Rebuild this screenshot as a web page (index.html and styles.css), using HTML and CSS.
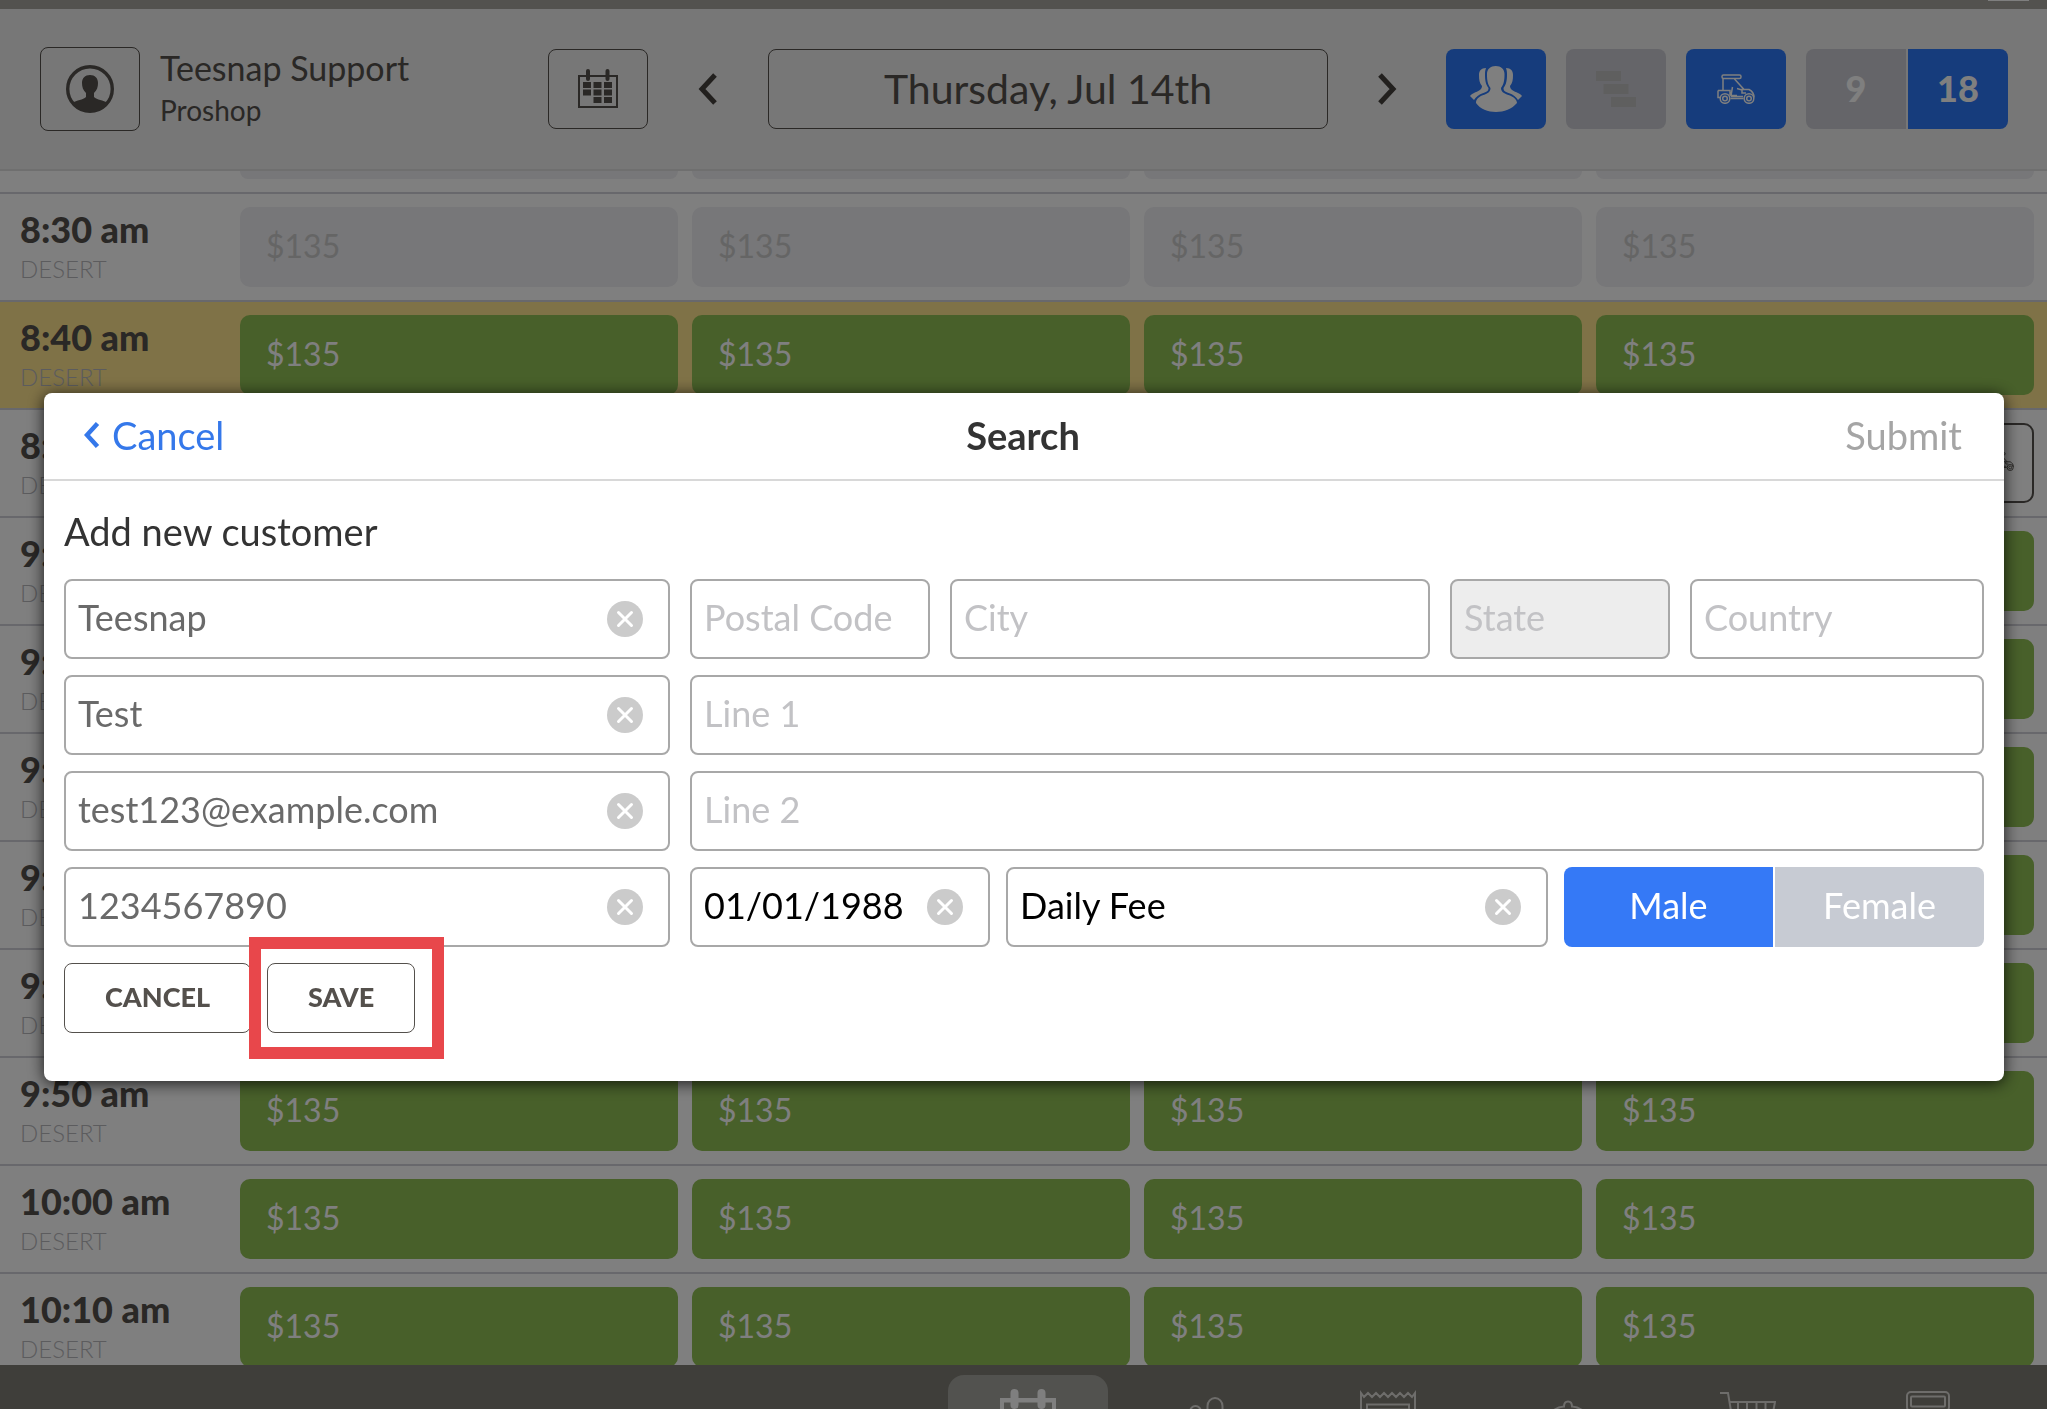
FILE: index.html
```html
<!DOCTYPE html>
<html lang="en">
<head>
<meta charset="utf-8">
<title>Tee Sheet</title>
<link rel="stylesheet" href="styles.css">
</head>
<body>
<svg class="symbols" aria-hidden="true">
  <symbol id="cart" viewBox="0 0 38 30">
    <g fill="none" stroke="currentColor" stroke-width="1.5">
      <rect x="5" y="1" width="19" height="3.5" rx="1.5"/>
      <path d="M6 5v11M17.500 5l10 11M1 16.500h12v5M1 16.500v7h2M15.500 13l-1.500 8.500h6M20 14.500l5 1.500v3h4M24 15.500h8c3 1.500 5 4 5 8M13.500 24.500h13M14 22.500h12"/>
      <circle cx="8" cy="24.500" r="4.800"/><circle cx="8" cy="24.500" r="2.300"/>
      <circle cx="32" cy="24.500" r="4.800"/><circle cx="32" cy="24.500" r="2.300"/>
    </g>
  </symbol>
  <symbol id="clear" viewBox="0 0 36 36">
    <circle cx="18" cy="18" r="18" fill="#cbcbcb"/>
    <path d="M11.500 11.500l13 13M24.500 11.500l-13 13" stroke="#fff" stroke-width="3" stroke-linecap="round"/>
  </symbol>
</svg>

<div class="app">
  <div class="status-bar"><span class="battery"></span></div>
  <header class="toolbar">
    <div class="account">
      <button class="icon-button icon-button-tall" aria-label="Account">
        <svg width="48" height="48" viewBox="0 0 48 48"><circle cx="24" cy="24" r="22.300" fill="none" stroke="currentColor" stroke-width="3.400"/><path fill="currentColor" d="M24 10c5 0 8 3 8 8 0 4-1 7-4 10v4c3 3 9 3 14 6-4 6-10 9-18 9S10 44 6 38c5-3 11-3 14-6v-4c-3-3-4-6-4-10 0-5 3-8 8-8z"/></svg>
      </button>
      <div class="account-text"><div class="account-name">Teesnap Support</div><div class="account-role">Proshop</div></div>
    </div>
    <button class="icon-button" aria-label="Calendar">
      <svg width="40" height="40" viewBox="0 0 40 40" fill="currentColor"><path d="M0 6h40v33H0zM2 8v29h36V8z" fill-rule="evenodd"/><rect x="8" width="4" height="12" rx="2"/><rect x="27.500" width="4" height="12" rx="2"/><path d="M5 13h8v6H5zM15.500 13h8v6h-8zM26 13h8v6h-8zM5 20.500h8v6H5zM15.500 20.500h8v6h-8zM26 20.500h8v6h-8zM15.500 28h8v6h-8zM26 28h8v6h-8z"/></svg>
    </button>
    <button class="arrow" aria-label="Previous day"><svg width="20" height="32" viewBox="0 0 20 32"><path d="M17 2L4 16l13 14" fill="none" stroke="currentColor" stroke-width="5"/></svg></button>
    <button class="date">Thursday, Jul 14th</button>
    <button class="arrow" aria-label="Next day"><svg width="20" height="32" viewBox="0 0 20 32"><path d="M3 2l13 14L3 30" fill="none" stroke="currentColor" stroke-width="5"/></svg></button>
    <div class="toggles">
      <button class="toggle toggle-on" aria-label="Players"><svg width="52" height="46" viewBox="0 0 52 46" fill="currentColor"><path d="M25.700 0C31 0 34.500 3 34.500 8c0 6-.5 10-3.500 14 0 5 5 6 9 7.500s7 4.500 7 7.500c-5 6-13 9-21 9S10 43 6 37c0-4 3-6 6-7.500 4-1.500 8.500-2.500 8.500-7.500C17.500 18 17 14 17 8c0-5 3.500-8 8.700-8z"/><path id="side" d="M16 2c-5 0-7 3-7 7 0 5 .5 8 3 11 0 4-4 5-8 7-3 1.500-4 3-4 3l4 4c2-3 5-5.500 8-6.500 4-1.500 6.500-2 6.500-5.500C15.500 18 15 14 15 8c0-3 .5-4.500 1-6z"/><use href="#side" transform="matrix(-1 0 0 1 52 0)"/></svg></button>
      <button class="toggle" aria-label="Staggered view"><svg width="40" height="36" viewBox="0 0 40 36" fill="#bebebe"><path d="M0 0h25v10H0zM7.500 13h25v10h-25zM15 26h25v10H15z"/></svg></button>
      <button class="toggle toggle-on" aria-label="Carts"><svg width="38" height="30"><use href="#cart"/></svg></button>
      <div class="holes"><button class="toggle">9</button><button class="toggle toggle-on">18</button></div>
    </div>
  </header>

  <main class="sheet">
    <div class="row row-clipped"><div class="time"></div><span class="slot"></span><span class="slot"></span><span class="slot"></span><span class="slot"></span></div>
    <div class="row row-past"><div class="time"><b>8:30 am</b><span>DESERT</span></div><button class="slot">$135</button><button class="slot">$135</button><button class="slot">$135</button><button class="slot">$135</button></div>
    <div class="row row-current"><div class="time"><b>8:40 am</b><span>DESERT</span></div><button class="slot">$135</button><button class="slot">$135</button><button class="slot">$135</button><button class="slot">$135</button></div>
    <div class="row"><div class="time"><b>8:50 am</b><span>DESERT</span></div><button class="slot">$135</button><button class="slot">$135</button><button class="slot">$135</button><button class="slot slot-booked" aria-label="Booked"><svg width="24" height="19"><use href="#cart"/></svg></button></div>
    <div class="row"><div class="time"><b>9:00 am</b><span>DESERT</span></div><button class="slot">$135</button><button class="slot">$135</button><button class="slot">$135</button><button class="slot">$135</button></div>
    <div class="row"><div class="time"><b>9:10 am</b><span>DESERT</span></div><button class="slot">$135</button><button class="slot">$135</button><button class="slot">$135</button><button class="slot">$135</button></div>
    <div class="row"><div class="time"><b>9:20 am</b><span>DESERT</span></div><button class="slot">$135</button><button class="slot">$135</button><button class="slot">$135</button><button class="slot">$135</button></div>
    <div class="row"><div class="time"><b>9:30 am</b><span>DESERT</span></div><button class="slot">$135</button><button class="slot">$135</button><button class="slot">$135</button><button class="slot">$135</button></div>
    <div class="row"><div class="time"><b>9:40 am</b><span>DESERT</span></div><button class="slot">$135</button><button class="slot">$135</button><button class="slot">$135</button><button class="slot">$135</button></div>
    <div class="row"><div class="time"><b>9:50 am</b><span>DESERT</span></div><button class="slot">$135</button><button class="slot">$135</button><button class="slot">$135</button><button class="slot">$135</button></div>
    <div class="row"><div class="time"><b>10:00 am</b><span>DESERT</span></div><button class="slot">$135</button><button class="slot">$135</button><button class="slot">$135</button><button class="slot">$135</button></div>
    <div class="row"><div class="time"><b>10:10 am</b><span>DESERT</span></div><button class="slot">$135</button><button class="slot">$135</button><button class="slot">$135</button><button class="slot">$135</button></div>
  </main>

  <nav class="tabs">
    <a class="tab tab-active" href="#sheet" aria-label="Tee sheet"><svg width="56" height="50" viewBox="0 0 56 50" fill="currentColor"><path d="M0 9h56v41H0zM4 13.500V46h48V13.500z" fill-rule="evenodd"/><rect x="10.500" width="8" height="20" rx="4"/><rect x="37.500" width="8" height="20" rx="4"/></svg></a>
    <a class="tab" href="#customers" aria-label="Customers"><svg width="56" height="50" viewBox="0 0 56 50" fill="none" stroke="currentColor" stroke-width="2"><path d="M27.500 30V17a7.500 8 0 0 1 15 0v13M10 30v-7a5.500 6 0 0 1 11 0v7"/></svg></a>
    <a class="tab" href="#reports" aria-label="Receipts"><svg width="56" height="50" viewBox="0 0 56 50" fill="none" stroke="currentColor" stroke-width="2"><path d="M1 50V4l3 4 4-4 4 4 4-4 4 4 4-4 4 4 4-4 4 4 4-4 4 4 4-4 4 4 3-4v46"/><path d="M7 15.500h42v5H7z"/></svg></a>
    <a class="tab" href="#food" aria-label="Food"><svg width="56" height="50" viewBox="0 0 56 50" fill="none" stroke="currentColor" stroke-width="2"><path d="M6 34C7 24 16 18 24 17.500c0-2.500 1-5 4-5s4 2.500 4 5C40 18 49 24 50 34"/></svg></a>
    <a class="tab" href="#shop" aria-label="Shop"><svg width="56" height="50" viewBox="0 0 56 50" fill="none" stroke="currentColor" stroke-width="2"><path d="M0 4h8l5 30M10 13h45l-4 21M18 13v20M27 13v20M36.500 13v20M45.500 13v20"/></svg></a>
    <a class="tab" href="#register" aria-label="Register"><svg width="56" height="50" viewBox="0 0 56 50" fill="none" stroke="currentColor" stroke-width="2"><rect x="7" y="3" width="42" height="19" rx="4"/><rect x="11" y="7.500" width="34" height="10" rx="1"/></svg></a>
  </nav>
</div>

<div class="backdrop">
  <section class="dialog" role="dialog" aria-labelledby="dialog-title">
    <div class="dialog-bar">
      <a class="back" href="#back"><svg width="16" height="26" viewBox="0 0 16 26"><path d="M13.500 1.500L3 13l10.500 11.500" fill="none" stroke="currentColor" stroke-width="4.500"/></svg>Cancel</a>
      <h1 id="dialog-title">Search</h1>
      <button class="submit" disabled>Submit</button>
    </div>
    <form class="form">
      <h2>Add new customer</h2>
      <div class="fields">
        <div class="line"><div class="field"><input value="Teesnap" placeholder="First Name" aria-label="First name"><button type="button" class="clear" aria-label="Clear"><svg width="36" height="36"><use href="#clear"/></svg></button></div></div>
        <div class="line line-place">
          <div class="field"><input placeholder="Postal Code" aria-label="Postal code"></div>
          <div class="field"><input placeholder="City" aria-label="City"></div>
          <div class="field"><input placeholder="State" aria-label="State" disabled></div>
          <div class="field"><input placeholder="Country" aria-label="Country"></div>
        </div>
        <div class="line"><div class="field"><input value="Test" placeholder="Last Name" aria-label="Last name"><button type="button" class="clear" aria-label="Clear"><svg width="36" height="36"><use href="#clear"/></svg></button></div></div>
        <div class="line"><div class="field"><input placeholder="Line 1" aria-label="Address line 1"></div></div>
        <div class="line"><div class="field"><input value="test123@example.com" placeholder="Email" aria-label="Email"><button type="button" class="clear" aria-label="Clear"><svg width="36" height="36"><use href="#clear"/></svg></button></div></div>
        <div class="line"><div class="field"><input placeholder="Line 2" aria-label="Address line 2"></div></div>
        <div class="line"><div class="field"><input value="1234567890" placeholder="Phone" aria-label="Phone"><button type="button" class="clear" aria-label="Clear"><svg width="36" height="36"><use href="#clear"/></svg></button></div></div>
        <div class="line line-details">
          <div class="field field-dark"><input value="01/01/1988" aria-label="Date of birth"><button type="button" class="clear" aria-label="Clear"><svg width="36" height="36"><use href="#clear"/></svg></button></div>
          <div class="field field-dark"><input value="Daily Fee" aria-label="Customer type"><button type="button" class="clear" aria-label="Clear"><svg width="36" height="36"><use href="#clear"/></svg></button></div>
          <div class="gender">
            <label><input type="radio" name="gender" checked><span>Male</span></label>
            <label><input type="radio" name="gender"><span>Female</span></label>
          </div>
        </div>
      </div>
      <div class="actions">
        <button type="button" class="action">CANCEL</button>
        <div class="marked"><button type="button" class="action">SAVE</button></div>
      </div>
    </form>
  </section>
</div>
</body>
</html>
```
FILE: styles.css
```css
* { box-sizing: border-box; }

body {
  margin: 0;
  font-family: Lato, "Open Sans", sans-serif;
  color: #54504c;
  background: #fff;
}

button, input { font: inherit; color: inherit; margin: 0; }
button { padding: 0; border: 0; background: none; }
svg { display: block; }
.symbols { display: none; }

.app {
  display: flex;
  flex-direction: column;
  height: 100vh;
  overflow: hidden;
}

/* Top bars */
.status-bar {
  flex: none;
  display: flex;
  justify-content: flex-end;
  height: 9px;
  padding-right: 18px;
  background: #a6a49e;
}
.battery { width: 41px; height: 1px; background: #fff; }

.toolbar {
  flex: none;
  display: grid;
  grid-template-columns: 508px 100px 120px 1fr 118px auto;
  align-items: center;
  height: 162px;
  padding: 0 39px 0 40px;
  background: #eee;
  border-bottom: 2px solid #dedede;
}
.account { display: flex; align-items: center; gap: 20px; }
.account-name { font-size: 34px; line-height: 42px; }
.account-role { font-size: 28px; line-height: 42px; }

.icon-button, .date {
  display: flex;
  align-items: center;
  justify-content: center;
  height: 80px;
  border: 1px solid #54504c;
  border-radius: 8px;
}
.icon-button { width: 100px; }
.icon-button-tall { height: 84px; }
.date { padding-bottom: 2px; font-size: 41px; }
.arrow { display: flex; justify-content: center; color: #44403c; }

.toggles { display: flex; gap: 20px; }
.holes { display: flex; gap: 2px; }
.toggle {
  display: flex;
  align-items: center;
  justify-content: center;
  width: 100px;
  height: 80px;
  border-radius: 8px;
  background: #cacbd2;
  color: #fff;
  font-size: 36px;
  font-weight: 900;
}
.toggle-on { background: #2c78f8; }
.holes .toggle { padding-bottom: 3px; }
.holes .toggle:first-child { border-radius: 8px 0 0 8px; }
.holes .toggle:last-child { border-radius: 0 8px 8px 0; }

/* Tee sheet */
.sheet { flex: 1; min-height: 0; overflow: hidden; }
.row {
  display: grid;
  grid-template-columns: 206px repeat(4, 1fr);
  column-gap: 14px;
  height: 108px;
  padding: 13px 13px 13px 20px;
  border-top: 2px solid #d0d0d8;
}
.row-clipped { height: 21px; padding-top: 0; border-top: 0; }
.row-current { background: #fee48e; }
.time b { display: block; font-size: 36px; line-height: 44px; font-weight: 900; }
.time span { display: block; font-size: 24px; line-height: 36px; font-weight: 300; color: #b8b8bc; }
.slot {
  display: flex;
  align-items: center;
  padding: 0 0 4px 26px;
  border-radius: 10px;
  background: #90c054;
  color: #fff;
  font-size: 32px;
}
.row-past .slot, .row-clipped .slot { background: #eeeef2; color: #cbcbcb; }
.row-clipped .slot { border-radius: 0 0 10px 10px; }
.slot-booked {
  justify-content: flex-end;
  padding-right: 18px;
  border: 2px solid #54504c;
  background: #fff;
  color: #54504c;
}

/* Bottom tabs */
.tabs {
  flex: none;
  display: flex;
  justify-content: flex-end;
  gap: 20px;
  height: 44px;
  padding: 10px 39px 0 0;
  overflow: hidden;
  background: #7e7c74;
}
.tab {
  display: flex;
  justify-content: center;
  width: 160px;
  height: 90px;
  padding-top: 14px;
  border-radius: 16px;
  color: #dcdad6;
}
.tab-active { background: #a4a49e; color: #fff; }

/* Customer dialog */
.backdrop {
  position: fixed;
  inset: 0;
  padding: 393px 43px 0 44px;
  background: rgba(0, 0, 0, 0.5);
}
.dialog {
  border-radius: 8px;
  background: #fff;
  box-shadow: 0 2px 16px rgba(0, 0, 0, 0.8);
  font-size: 36px;
  font-weight: 400;
}
.dialog-bar {
  display: grid;
  grid-template-columns: 1fr auto 1fr;
  align-items: center;
  height: 88px;
  padding: 0 42px 2px 40px;
  border-bottom: 2px solid #d8d8d8;
  font-size: 38px;
}
.back {
  display: flex;
  align-items: center;
  gap: 12px;
  color: #3578ea;
  text-decoration: none;
}
h1, h2 { margin: 0; font-size: 38px; color: #333; }
h1 { font-weight: 700; }
h2 { font-weight: 400; line-height: 44px; }
.submit { justify-self: end; color: #a5a5a5; }

.form { padding: 28px 20px 48px; }
.fields {
  display: grid;
  grid-template-columns: 606px 1fr;
  gap: 16px 20px;
  margin-top: 26px;
}
.line { display: grid; }
.line-place { grid-template-columns: 240px 1fr 220px 294px; gap: 20px; }
.line-details { grid-template-columns: 300px 1fr 420px; gap: 16px; }
.field {
  display: flex;
  align-items: center;
  height: 80px;
  border: 2px solid #a8a8a8;
  border-radius: 8px;
  color: #6a6a6a;
  overflow: hidden;
}
.field input {
  flex: 1;
  min-width: 0;
  height: 100%;
  padding: 0 0 4px 12px;
  border: 0;
  background: none;
}
.field input::placeholder { color: #c2c2c5; opacity: 1; }
.field:has(input:disabled) { background: #ededed; }
.field-dark { color: #000; }
.clear { flex: none; margin-right: 25px; }

.gender { display: grid; grid-template-columns: 1fr 1fr; gap: 2px; }
.gender label { display: flex; }
.gender input { appearance: none; width: 0; height: 0; }
.gender span {
  flex: 1;
  display: flex;
  align-items: center;
  justify-content: center;
  padding-bottom: 4px;
  background: #c7cbd3;
  color: #fff;
}
.gender input:checked + span { background: #3579f6; }
.gender label:first-child span { border-radius: 8px 0 0 8px; }
.gender label:last-child span { border-radius: 0 8px 8px 0; }

.actions { display: flex; gap: 16px; margin-top: 16px; }
.action {
  height: 70px;
  padding: 0 40px 3px;
  border: 1px solid #54504c;
  border-radius: 8px;
  font-size: 27px;
  font-weight: 900;
}
.marked { position: relative; }
.marked::after {
  content: "";
  position: absolute;
  inset: -26px -29px -26px -18px;
  border: 12px solid #e8474b;
}
```
